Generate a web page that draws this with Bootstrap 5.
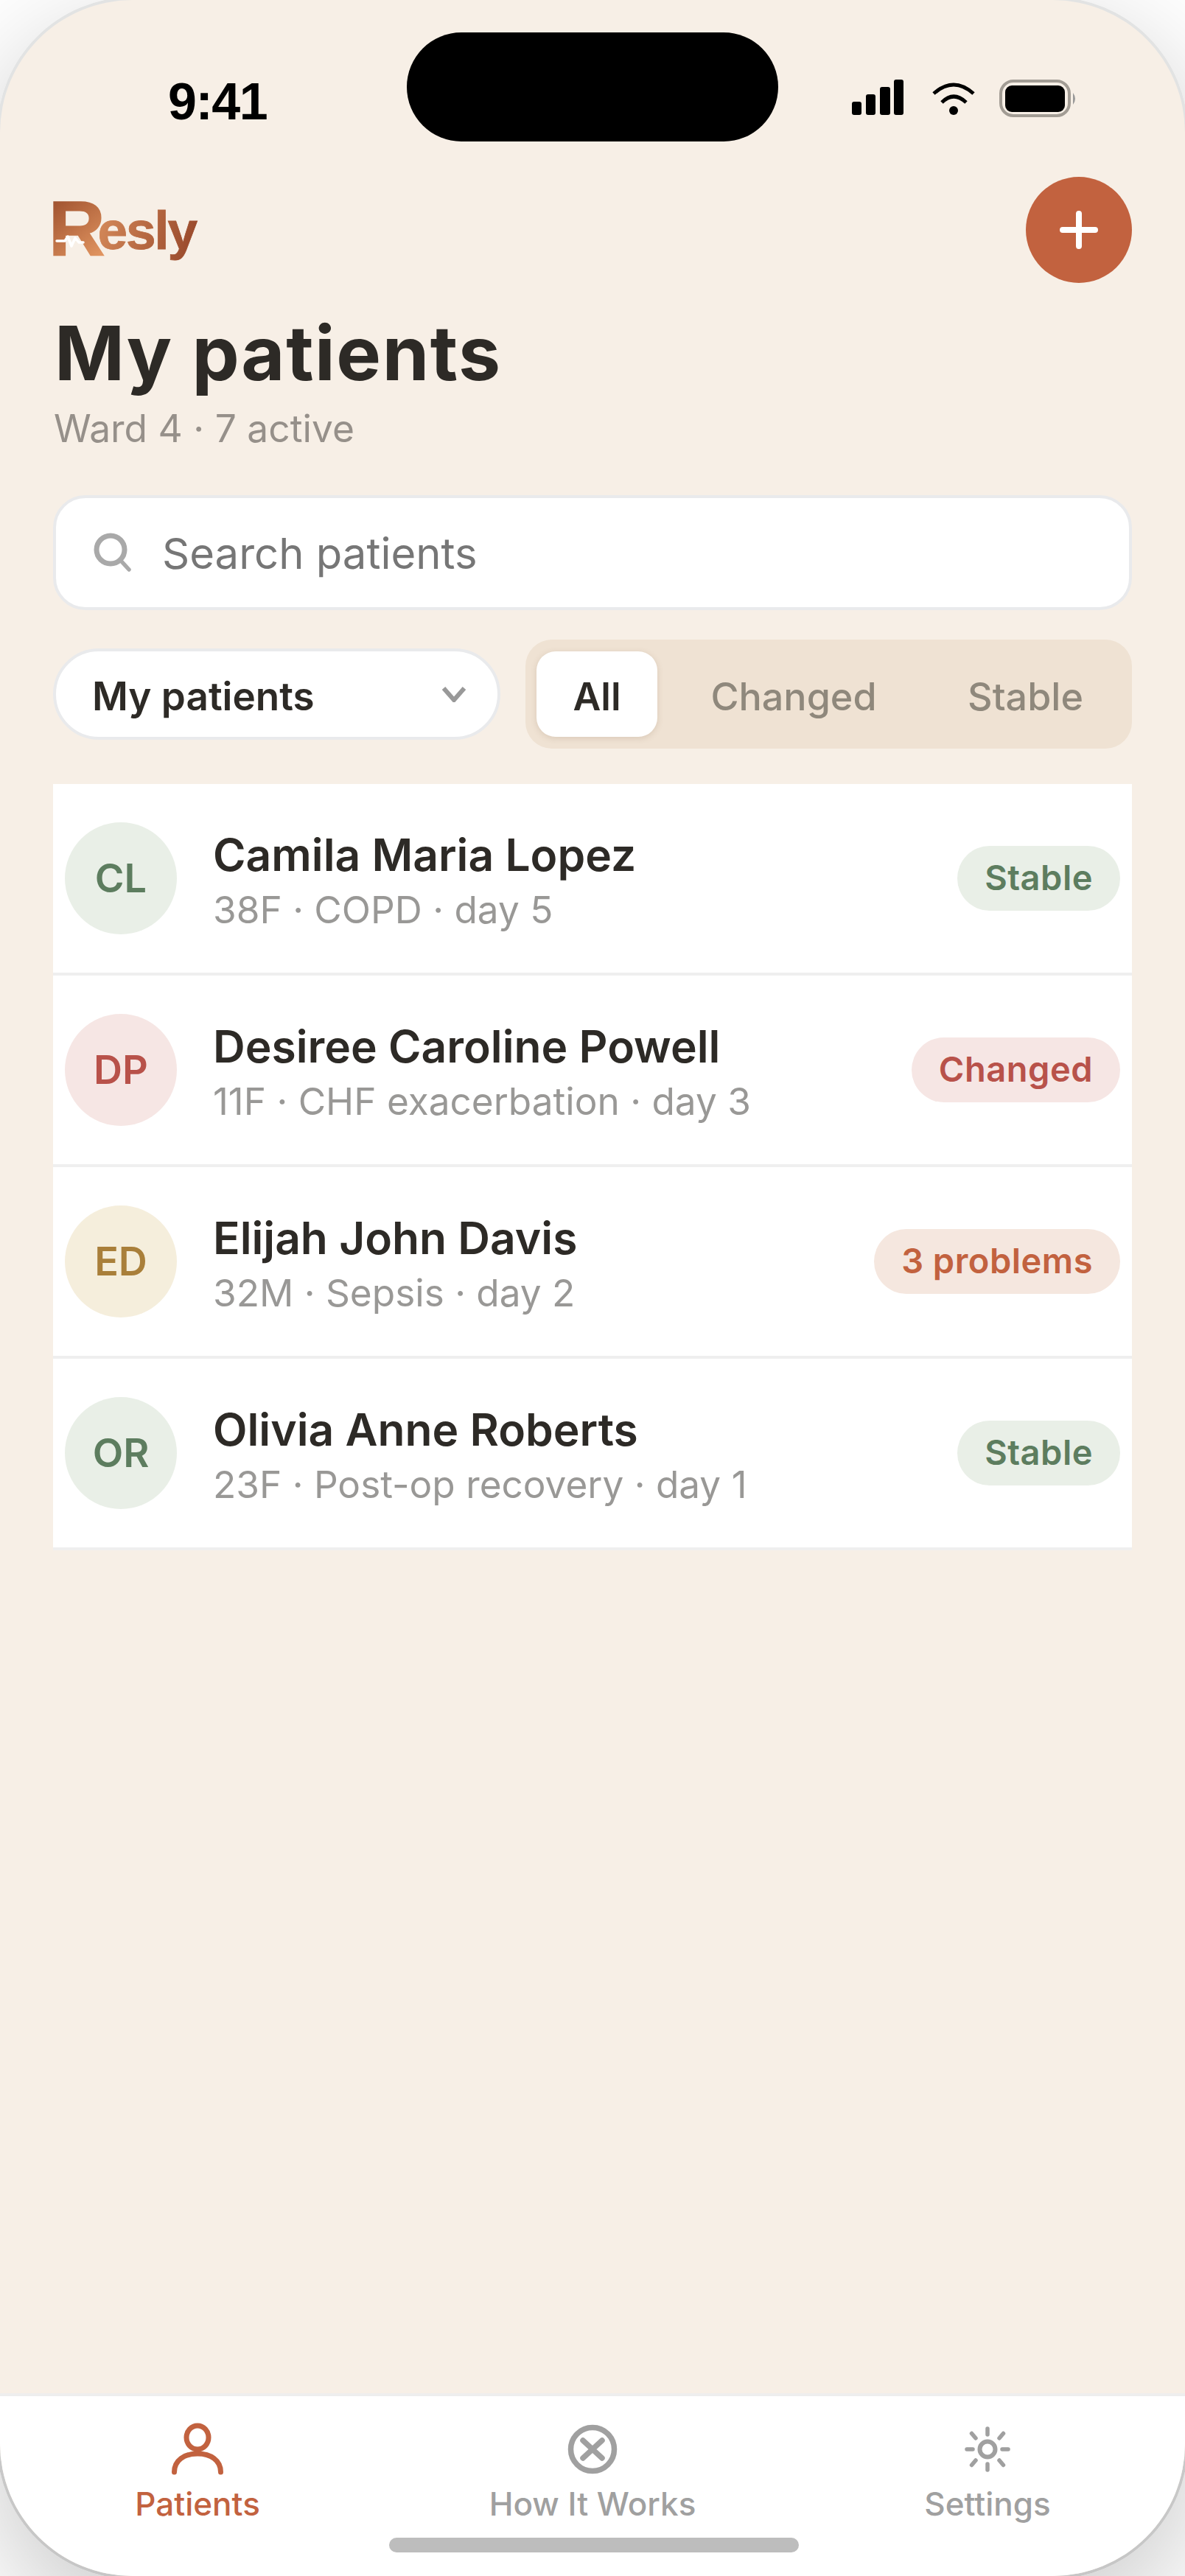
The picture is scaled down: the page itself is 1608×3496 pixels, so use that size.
<!DOCTYPE html>
<html lang="en">
<head>
<meta charset="UTF-8">
<meta name="viewport" content="width=device-width, initial-scale=1.0">
<title>Resly - My patients</title>
<link href="https://cdn.jsdelivr.net/npm/bootstrap@5.3.0/dist/css/bootstrap.min.css" rel="stylesheet">
<style>
    body {
        margin: 0;
        font-family: Inter, "Liberation Sans", sans-serif;
        background: #fff;
    }
    .phone-shell { width: 1608px; height: 3496px; overflow: hidden; background: #fff; }
    .phone-ring {
        position: absolute;
        inset: -4px;
        border-radius: 184px;
        background: linear-gradient(180deg, #e2e3e3 0%, #e2e3e3 50%, #c6c6c6 100%);
        box-shadow: 0 50px 160px rgba(0, 0, 0, .22);
    }
    .phone-frame {
        width: 1608px;
        height: 3496px;
        background: #f7efe6;
        border-radius: 180px;
        overflow: hidden;
    }
    .status-row { height: 240px; padding: 44px 0 0 228px; }
    .status-time { font: 700 70px/1 "Liberation Sans", sans-serif; color: #000; margin-top: 59px; width: 324px; flex: none; letter-spacing: -1.5px; }
    .island { width: 504px; height: 148px; background: #000; border-radius: 74px; flex: none; }
    .status-icons { display: block; margin-left: 100px; margin-top: 64px; flex: none; }
    .head-row { padding: 0 72px; height: 144px; }
    .logo-mark { margin: 10px 0 0 -12px; flex: none; }
    .add-circle { width: 144px; height: 144px; border: 0; padding: 0; border-radius: 50%; background: #c2623f; }
    .page-title { font-size: 102px; font-weight: 700; line-height: 1; letter-spacing: 1.6px; color: #2d2a26; margin: 44px 0 0 2px; }
    .page-sub { font-size: 51.5px; color: #96908a; line-height: 1; margin: 26px 0 0 1px; }
    .content-wrap { padding: 0 72px; }
    .search-box { height: 156px; margin-top: 64px; background: #fff; border: 4px solid #e9eaec; border-radius: 44px; padding: 0 50px; gap: 38px; }
    .search-box input { border: 0; outline: 0; padding: 4px 0 0; flex: 1; min-width: 0; font-size: 58px; font-family: inherit; background: transparent; }
    .search-box input::placeholder { color: #767676; opacity: 1; }
    .filter-row { margin-top: 40px; gap: 34px; height: 148px; }
    .who-select { width: 607px; flex: none; height: 124px; background: #fff; border: 4px solid #e9eaec; border-radius: 62px; padding: 0 42px 0 49px; font-size: 53px; font-weight: 600; color: #2d2a26; }
    .who-label { padding-top: 8px; }
    .seg-wrap { width: 823px; flex: none; height: 148px; background: #efe2d3; border-radius: 36px; padding: 16px 15px; }
    .seg-item { font-size: 52px; font-weight: 500; color: #8f887c; border: 0; background: transparent; padding: 8px 0 0; height: 116px; flex: none; }
    .seg-item.is-on { width: 164px; background: #fff; color: #2d2a26; font-weight: 600; border-radius: 26px; box-shadow: 0 2px 8px rgba(120, 90, 60, .18); }
    .seg-changed { width: 370px; }
    .seg-stable { width: 259px; }
    .patient-list { margin-top: 48px; border-radius: 0; }
    .patient-row { height: 260px; padding: 0 16px; border-bottom: 4px solid #efefef; background: #fff; gap: 49px; }
    .avatar-dot { width: 152px; height: 152px; border-radius: 50%; font-size: 54px; font-weight: 600; flex: none; }
    .patient-text { padding-top: 7px; }
    .patient-name { font-size: 60.5px; font-weight: 600; line-height: 1; color: #2d2a26; }
    .patient-meta { font-size: 51.3px; line-height: 1; color: #999896; margin-top: 18px; }
    .state-pill { height: 88px; border-radius: 44px; padding: 0 37px; font-size: 47px; font-weight: 600; letter-spacing: .5px; flex: none; margin-left: auto; }
    .tone-green { background: #e9efe7; color: #5d7d5f; }
    .tone-red { background: #f6e6e4; color: #b8524a; }
    .tone-amber { background: #f5eedc; color: #a97f3a; }
    .tone-orange { background: #f5e7df; color: #c2623f; }
    .tab-bar { position: absolute; left: 0; right: 0; bottom: 0; height: 248px; background: #fff; border-top: 4px solid #eeeeee; }
    .tab-cell { width: 536px; padding-top: 36px; color: #a0a0a0; font-size: 44px; font-weight: 500; line-height: 1; }
    .tab-cell svg { display: block; margin-bottom: 16px; }
    .tab-cell.is-on { color: #c2623f; }
    .home-bar { position: absolute; left: 528px; bottom: 32px; width: 556px; height: 20px; background: #bdbdbd; border-radius: 10px; }
</style>
</head>
<body>
<div class="phone-shell position-relative">
<div class="phone-ring"></div>
<div class="phone-frame position-relative">
    <!-- status bar -->
    <div class="status-row d-flex align-items-start">
        <div class="status-time">9:41</div>
        <div class="island"></div>
        <svg class="status-icons" width="310" height="56" viewBox="1156 108 310 56">
            <g fill="#000">
                <rect x="1156" y="138" width="13" height="18" rx="3"/>
                <rect x="1175" y="128" width="13" height="28" rx="3"/>
                <rect x="1194" y="118" width="14" height="38" rx="3"/>
                <rect x="1213" y="108" width="13" height="48" rx="3"/>
                <circle cx="1294" cy="150" r="6"/>
            </g>
            <path d="M1267 127Q1294 103 1321 127M1278 139Q1294 123 1311 139" fill="none" stroke="#000" stroke-width="5"/>
            <rect x="1358" y="110" width="93" height="47" rx="17" fill="none" stroke="#a29c94" stroke-width="4"/>
            <rect x="1364" y="116" width="81" height="36" rx="9" fill="#000"/>
            <path d="M1456 126Q1462 134 1456 142Z" fill="#999"/>
        </svg>
    </div>

    <!-- logo + add -->
    <div class="head-row d-flex justify-content-between align-items-start">
        <svg class="logo-mark" width="220" height="130" viewBox="60 250 220 130" aria-label="Resly">
            <defs>
                <linearGradient id="logoFill" gradientUnits="userSpaceOnUse" x1="73" y1="271" x2="135" y2="347">
                    <stop offset="0" stop-color="#a0522f"/>
                    <stop offset="1" stop-color="#e09460"/>
                </linearGradient>
                <linearGradient id="logoFill2" gradientUnits="userSpaceOnUse" x1="130" y1="300" x2="266" y2="340">
                    <stop offset="0" stop-color="#d58a5a"/>
                    <stop offset="1" stop-color="#97472a"/>
                </linearGradient>
            </defs>
            <text x="66" y="347" font-family="Liberation Sans" font-weight="700"><tspan font-size="106" letter-spacing="-10" fill="url(#logoFill)" stroke="url(#logoFill)" stroke-width="1.5">R</tspan><tspan dy="-9" font-size="73" letter-spacing="-2.2" fill="url(#logoFill2)" stroke="url(#logoFill2)" stroke-width=".8">esly</tspan></text>
            <path d="M77 327H88L92 321L97 334L102 323L107 329H113" fill="none" stroke="#fff" stroke-width="3.5" stroke-linecap="round" stroke-linejoin="round"/>
        </svg>
        <button class="add-circle d-flex align-items-center justify-content-center" type="button" aria-label="Add patient">
            <svg width="52" height="52" viewBox="0 0 52 52"><path d="M26 4V48M4 26H48" stroke="#fff" stroke-width="8" stroke-linecap="round"/></svg>
        </button>
    </div>

    <div class="content-wrap">
        <h1 class="page-title">My patients</h1>
        <p class="page-sub mb-0">Ward 4 · 7 active</p>

        <div class="search-box d-flex align-items-center">
            <svg width="56" height="56" viewBox="0 0 56 56" class="flex-shrink-0"><circle cx="24" cy="24" r="19" fill="none" stroke="#a9a9a9" stroke-width="7"/><path d="M38 39L49 51" stroke="#a9a9a9" stroke-width="5.500" stroke-linecap="round"/></svg>
            <input type="text" placeholder="Search patients">
        </div>

        <div class="filter-row d-flex align-items-center">
            <div class="who-select d-flex align-items-center justify-content-between">
                <span class="who-label">My patients</span>
                <svg width="34" height="22" viewBox="0 0 34 22"><path d="M3 3L17 19L31 3" fill="none" stroke="#999" stroke-width="6"/></svg>
            </div>
            <div class="seg-wrap d-flex align-items-center">
                <button class="seg-item is-on" type="button">All</button>
                <button class="seg-item seg-changed" type="button">Changed</button>
                <button class="seg-item seg-stable" type="button">Stable</button>
            </div>
        </div>

        <div class="patient-list list-group">
            <div class="patient-row d-flex align-items-center">
                <div class="avatar-dot tone-green d-flex align-items-center justify-content-center">CL</div>
                <div class="patient-text"><div class="patient-name">Camila Maria Lopez</div><div class="patient-meta">38F · COPD · day 5</div></div>
                <span class="state-pill tone-green d-flex align-items-center">Stable</span>
            </div>
            <div class="patient-row d-flex align-items-center">
                <div class="avatar-dot tone-red d-flex align-items-center justify-content-center">DP</div>
                <div class="patient-text"><div class="patient-name">Desiree Caroline Powell</div><div class="patient-meta">11F · CHF exacerbation · day 3</div></div>
                <span class="state-pill tone-red d-flex align-items-center">Changed</span>
            </div>
            <div class="patient-row d-flex align-items-center">
                <div class="avatar-dot tone-amber d-flex align-items-center justify-content-center">ED</div>
                <div class="patient-text"><div class="patient-name">Elijah John Davis</div><div class="patient-meta">32M · Sepsis · day 2</div></div>
                <span class="state-pill tone-orange d-flex align-items-center">3 problems</span>
            </div>
            <div class="patient-row d-flex align-items-center">
                <div class="avatar-dot tone-green d-flex align-items-center justify-content-center">OR</div>
                <div class="patient-text"><div class="patient-name">Olivia Anne Roberts</div><div class="patient-meta">23F · Post-op recovery · day 1</div></div>
                <span class="state-pill tone-green d-flex align-items-center">Stable</span>
            </div>
        </div>
    </div>

    <!-- bottom tabs -->
    <div class="tab-bar d-flex justify-content-center">
        <div class="tab-cell is-on d-flex flex-column align-items-center">
            <svg width="72" height="72" viewBox="0 0 72 72" fill="none" stroke="#c2623f" stroke-width="7" stroke-linecap="round"><ellipse cx="36" cy="20" rx="15" ry="16"/><path d="M4.500 67C4.500 51 18 42 36 42S67.500 51 67.500 67"/></svg>
            Patients
        </div>
        <div class="tab-cell d-flex flex-column align-items-center">
            <svg width="72" height="72" viewBox="0 0 72 72" fill="none" stroke="#a0a0a0" stroke-width="7.500" stroke-linecap="round"><circle cx="36" cy="36" r="29.500"/><path d="M23 24L49 48M49 24L23 48"/></svg>
            How It Works
        </div>
        <div class="tab-cell d-flex flex-column align-items-center">
            <svg width="72" height="72" viewBox="0 0 72 72" fill="none" stroke="#a0a0a0" stroke-width="5.500" stroke-linecap="round"><circle cx="36" cy="36" r="10.500" stroke-width="6"/><path d="M36 8V16M36 56V64M8 36H16M56 36H64M14.500 14.500L20 21M52 51L57.500 57.500M14.500 57.500L20 51M52 21L57.500 14.500"/></svg>
            Settings
        </div>
    </div>
    <div class="home-bar"></div>
</div>
</div>
</body>
</html>
